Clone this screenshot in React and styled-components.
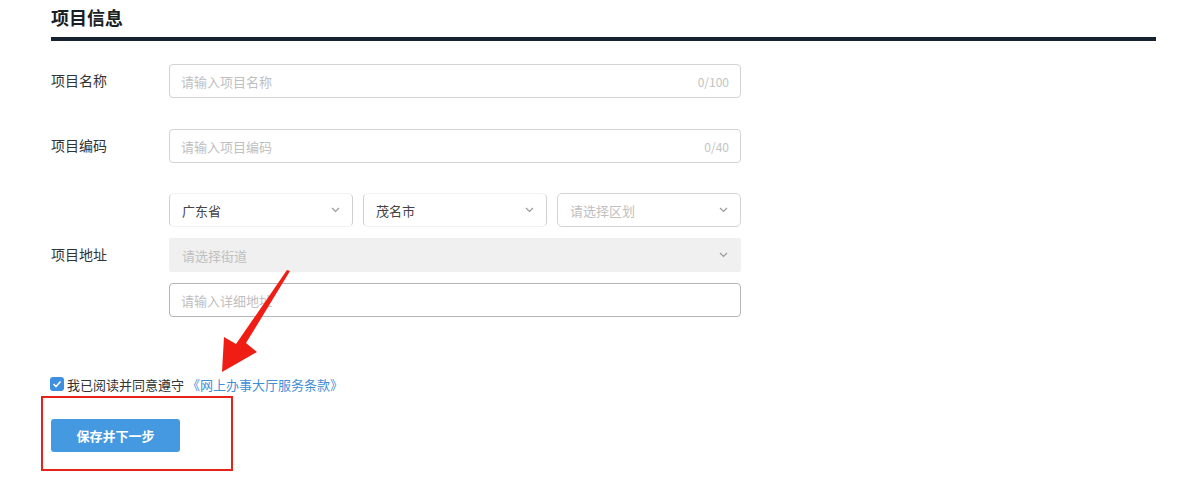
import React from 'react';
import styled, { createGlobalStyle } from 'styled-components';

const GlobalStyle = createGlobalStyle`
  body {
    margin: 0;
    background: #fff;
    font-family: 'Noto Sans CJK SC', 'Noto Sans', sans-serif;
    color: #333;
  }
`;

const Page = styled.div`
  position: relative;
  width: 1200px;
  height: 489px;
  padding: 0 44px 0 51px;
  box-sizing: border-box;
`;

const Title = styled.h2`
  margin: 0;
  padding-top: 5px;
  height: 32px;
  font-size: 18px;
  line-height: 24px;
  font-weight: 700;
  color: #1b1f24;
`;

const Bar = styled.div`
  height: 4px;
  background: #14232f;
  margin-bottom: 23px;
`;

const Row = styled.div`
  display: grid;
  grid-template-columns: 118px 572px;
  align-items: center;
  margin-bottom: ${(p) => p.$gap || 31}px;
`;

const Label = styled.div`
  font-size: 14px;
  line-height: 18px;
  margin-top: -2px;
  color: #333;
`;

const Field = styled.div`
  position: relative;
  display: flex;
  align-items: center;
  height: 34px;
  box-sizing: border-box;
  border: 1px solid ${(p) => p.$border || '#d3d3d3'};
  border-radius: 4px;
  padding: 0 11px;
  font-size: 13px;
  color: #c0c0c0;
  background: #fff;
`;

const Counter = styled.span`
  margin-left: auto;
  color: #c3c3c3;
  font-size: 12px;
`;

const Stack = styled.div`
  display: flex;
  flex-direction: column;
  gap: 11px;
`;

const SelectRow = styled.div`
  display: flex;
  gap: 10px;

  & > * {
    flex: 1;
  }
`;

const Select = styled.div`
  display: flex;
  align-items: center;
  justify-content: space-between;
  height: 34px;
  flex-shrink: 0;
  box-sizing: border-box;
  padding: 0 12px;
  border: 1px solid #d3d3d3;
  border-color: ${(p) => (p.$faint ? '#f1f1f1 #cfcfcf' : '#d3d3d3')};
  border-radius: 5px;
  font-size: 13px;
  color: ${(p) => (p.$placeholder ? '#c0c0c0' : '#444')};
  background: ${(p) => (p.$disabled ? '#f0f0f0' : '#fff')};
  ${(p) => p.$disabled && 'border-color: #f0f0f0; border-radius: 2px;'}
`;

const Chevron = () => (
  <svg width="9" height="6" viewBox="0 0 9 6">
    <path d="M1 1l3.5 3.5L8 1" fill="none" stroke="#9a9a9a" strokeWidth="1.2" />
  </svg>
);

const Agree = styled.div`
  display: flex;
  align-items: center;
  gap: 3px;
  margin-top: 59px;
  margin-left: -1px;
  font-size: 13px;
  color: #333;
  height: 16px;
`;

const Check = styled.span`
  width: 14px;
  height: 14px;
  border-radius: 3px;
  background: #3f8fe0;
  display: inline-flex;
  align-items: center;
  justify-content: center;
`;

const Link = styled.span`
  color: #3f8fd6;
`;

const Highlight = styled.div`
  margin: 4px 0 0 -10px;
  width: 192px;
  height: 75px;
  box-sizing: border-box;
  border: 2px solid #e5231b;
  padding: 21px 0 0 8px;
`;

const Button = styled.button`
  width: 129px;
  height: 33px;
  border: none;
  border-radius: 3px;
  background: #4499e1;
  color: #fff;
  font-family: inherit;
  font-size: 13px;
  font-weight: 700;
`;

const Arrow = styled.svg`
  position: absolute;
  left: 0;
  top: 0;
  pointer-events: none;
`;

const App = () => (
  <Page>
    <GlobalStyle />
    <Title>项目信息</Title>
    <Bar />

    <Row>
      <Label>项目名称</Label>
      <Field>
        请输入项目名称
        <Counter>0/100</Counter>
      </Field>
    </Row>

    <Row $gap={30}>
      <Label>项目编码</Label>
      <Field>
        请输入项目编码
        <Counter>0/40</Counter>
      </Field>
    </Row>

    <Row $gap={0}>
      <Label>项目地址</Label>
      <Stack>
        <SelectRow>
          <Select $faint>
            广东省
            <Chevron />
          </Select>
          <Select $faint>
            茂名市
            <Chevron />
          </Select>
          <Select $placeholder>
            请选择区划
            <Chevron />
          </Select>
        </SelectRow>
        <Select $placeholder $disabled>
          请选择街道
          <Chevron />
        </Select>
        <Field $border="#b5b5b5">请输入详细地址</Field>
      </Stack>
    </Row>

    <Agree>
      <Check>
        <svg width="10" height="8" viewBox="0 0 10 8">
          <path d="M1.5 4l2.5 2.5L8.5 1.5" fill="none" stroke="#fff" strokeWidth="1.6" />
        </svg>
      </Check>
      我已阅读并同意遵守<Link>《网上办事大厅服务条款》</Link>
    </Agree>

    <Highlight>
      <Button>保存并下一步</Button>
    </Highlight>

    <Arrow width="1200" height="489">
      <polygon
        points="290,271 246,343 257,352 222,372 224,337 236,344 287,270"
        fill="#f01d14"
      />
    </Arrow>
  </Page>
);

export default App;
